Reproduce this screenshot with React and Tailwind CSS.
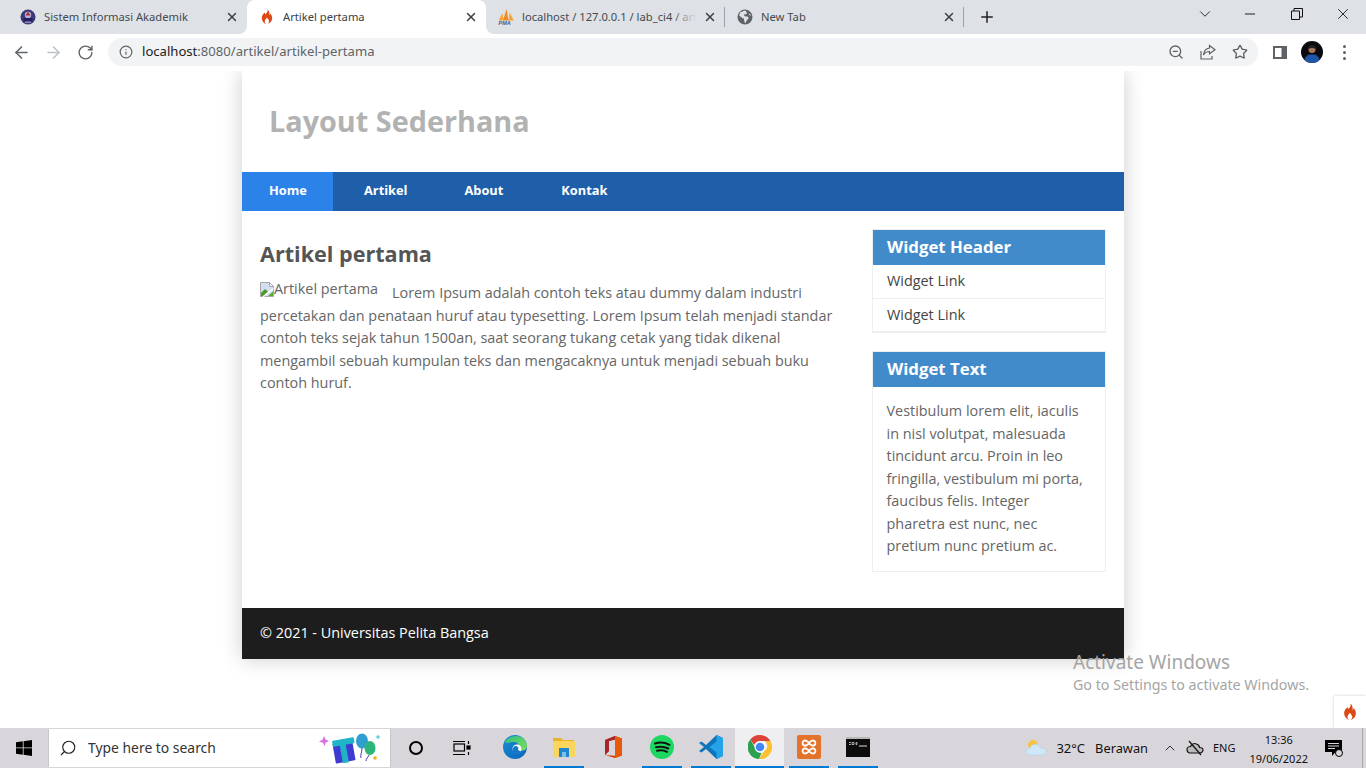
import React from "react";
import {
  ArrowLeft,
  ArrowRight,
  RotateCw,
  Info,
  ZoomOut,
  Star,
  ChevronDown,
  ChevronUp,
  X,
  Plus,
  Minus,
  Search,
} from "lucide-react";

const UI_FONT = "font-['Noto_Sans',sans-serif]";

// --- favicons and app logos ---
const Flame = ({ size = 16 }) => (
  <svg width={size} height={size} viewBox="0 0 16 16">
    <path
      fill="#dd4814"
      d="M8.6 0.6c.5 2.2-1 3.4-2.2 4.8C6 4.8 5.9 4.2 6 3.5 4.2 4.8 2.6 6.8 2.8 9.4c.2 3 2.4 5.2 4.6 5.8-1.2-.9-1.9-2-1.6-3.3.3-1.3 1.4-2 2-3.3.7 1 1.9 1.9 2.2 3.3.2 1.3-.5 2.5-1.6 3.3 2.5-.6 4.6-2.9 4.8-5.6.2-2.7-1.2-4.2-2-5.2-.1.8-.4 1.4-1 1.8C10.6 4.300 10.400 2 8.600.6z"
    />
  </svg>
);

const AkademikIcon = () => (
  <svg width="16" height="16" viewBox="0 0 16 16">
    <circle cx="8" cy="8" r="7.5" fill="#3d3a7c" />
    <circle cx="8" cy="6" r="3.2" fill="#b9b4d6" />
    <path d="M8 2.500 10.500 6.500H5.500z" fill="#a8323a" />
    <rect x="3.500" y="9" width="9" height="3.500" fill="#23205e" />
    <rect x="5" y="12.500" width="6" height="1.500" fill="#8f8bbd" />
  </svg>
);

const PmaIcon = () => (
  <svg width="16" height="16" viewBox="0 0 16 16">
    <path d="M0.500 11.500 4.500 4l1 7.500z" fill="#f6a53a" />
    <path d="M5 11.500 8.500 0 10.500 11.500z" fill="#f18a21" />
    <path d="M10.500 11.500 11.800 3.500l4 8z" fill="#f6a53a" />
    <text x="0.500" y="16" fontSize="5.500" fontWeight="700" fontStyle="italic" fill="#4a5c8f" fontFamily="Liberation Sans">
      PMA
    </text>
  </svg>
);

const GlobeIcon = () => (
  <svg width="16" height="16" viewBox="0 0 16 16">
    <circle cx="8" cy="8" r="7.500" fill="#5f6368" />
    <path
      fill="#dee1e6"
      d="M7 1.800 3 3.600l-.8 3 3.300 2.600 1.500.2v1.800l1 2.700.9-.1.700-2.400 1.900-2-.2-1.700-3.400-.5-1.200-1.400 1.100-.6.900.4 1.400-1.300L8.700 1.700zM12.500 4.500l-.8 1 1.800 1.300.5-.3z"
    />
  </svg>
);

const WindowsLogo = () => (
  <svg width="16" height="16" viewBox="0 0 16 16" fill="#000">
    <path d="M0 2.200 6.800 1.300v6.200H0zM7.600 1.200 16 0v7.500H7.600zM0 8.300h6.800v6.400L0 13.800zM7.600 8.300H16V16l-8.400-1.200z" />
  </svg>
);

const GiftArt = () => (
  <svg width="70" height="34" viewBox="0 0 70 34">
    <path d="M6 5l1.500 3.500L11 10 7.800 11.500 6.500 15 5 11.800 1 10.500 4.500 8.800z" fill="#d76ee6" />
    <rect x="16" y="11" width="20" height="20" rx="1" fill="#3d3bd1" transform="rotate(-10 26 21)" />
    <rect x="23" y="9" width="6" height="23" fill="#20b3c4" transform="rotate(-10 26 21)" />
    <rect x="15" y="8" width="22" height="6" rx="1" fill="#1fb5c7" transform="rotate(-10 26 15)" />
    <ellipse cx="44" cy="10" rx="6" ry="7.500" fill="#2f9fd0" />
    <ellipse cx="52" cy="17" rx="5.500" ry="7" fill="#2eb57a" />
    <path d="M44 17c0 5-2 7-1 10M51 24c-1 3-3 3-3 6" stroke="#4a3bb0" strokeWidth="1" fill="none" />
    <circle cx="60" cy="6" r="1.800" fill="#5ed5e5" />
    <circle cx="57" cy="27" r="1.800" fill="#f6b01e" />
  </svg>
);

const TaskViewIcon = () => (
  <svg width="18" height="16" viewBox="0 0 18 16" fill="none" stroke="#000" strokeWidth="1.200">
    <rect x="1" y="4" width="10.500" height="7" />
    <path d="M0 1.500h12M0 14.500h12M15.500 1v3M15.500 12v3" />
    <rect x="14" y="6" width="3" height="3" fill="#000" />
  </svg>
);

const EdgeIcon = () => (
  <svg width="24" height="24" viewBox="0 0 24 24">
    <defs>
      <linearGradient id="edgeA" x1="0" y1="0" x2="1" y2="1">
        <stop offset="0" stopColor="#2fc27e" />
        <stop offset="1" stopColor="#7fdc5f" />
      </linearGradient>
      <linearGradient id="edgeB" x1="0" y1="0" x2="1" y2="1">
        <stop offset="0" stopColor="#1a8fd6" />
        <stop offset="1" stopColor="#0b63b8" />
      </linearGradient>
    </defs>
    <circle cx="12" cy="12" r="12" fill="url(#edgeB)" />
    <path d="M2 7C5 1 14-1 20 3c4 3 5 8 3 11-2 2-6 2-8 0 2-3 0-7-4-7S4 9 2 7z" fill="url(#edgeA)" />
    <circle cx="14" cy="14" r="4.500" fill="#fff" />
    <path d="M12 11c3 0 4 2 3 4l4 2c-2 3-6 3-8 1-2-2-2-5 1-7z" fill="#1478c8" />
  </svg>
);

const ExplorerIcon = () => (
  <svg width="22" height="20" viewBox="0 0 22 20">
    <path d="M0 1h8l2 2h11v4H0z" fill="#e9b32c" />
    <rect y="4" width="22" height="16" rx="1" fill="#fbd55c" />
    <path d="M6 11h10v9h-3v-5H9v5H6z" fill="#1f87cf" />
    <rect x="9" y="15" width="4" height="5" fill="#7ac2ea" />
  </svg>
);

const OfficeIcon = () => (
  <svg width="18" height="22" viewBox="0 0 18 22">
    <path d="M11 0 18 2.500v17L11 22 1 19l10 .7V3.500L5 5v10l-4 4V4z" fill="#d83b01" />
    <path d="M1 4 11 0v3.500L5 5v10l-4 4z" fill="#a4262c" />
    <path d="M11 0l7 2.500v17L11 22z" fill="#e8590c" />
  </svg>
);

const SpotifyIcon = () => (
  <svg width="24" height="24" viewBox="0 0 24 24">
    <circle cx="12" cy="12" r="12" fill="#1ed760" />
    <path d="M5 8.500c5-1.500 10-1 14.500 1.300M6 12.300c4.500-1.200 8.500-.7 12.300 1.200M7 15.800c3.600-.9 7-.6 10 1" stroke="#111" strokeWidth="2" fill="none" strokeLinecap="round" />
  </svg>
);

const VscodeIcon = () => (
  <svg width="24" height="24" viewBox="0 0 24 24">
    <path d="M17.500 0 24 3v18l-6.500 3L7 14l-4.500 3.500L0 16l5-4-5-4 2.500-1.500L7 10z" fill="#0e75bc" />
    <path d="M17.500 0 24 3v18l-6.500 3zM17.500 6.500 10.500 12l7 5.500z" fill="#24a3e8" fillRule="evenodd" />
  </svg>
);

const ChromeIcon = () => (
  <svg width="24" height="24" viewBox="0 0 24 24">
    <path d="M12 0a12 12 0 0 1 10.400 6H12a6 6 0 0 0-5.700 4L2.300 4.500A12 12 0 0 1 12 0z" fill="#dc4437" />
    <path d="M22.400 6A12 12 0 0 1 11 24l5.200-8a6 6 0 0 0 .6-10z" fill="#fbc02d" />
    <path d="M2.300 4.500 7 12.600a6 6 0 0 0 6.500 5.200L11 24A12 12 0 0 1 2.300 4.500z" fill="#2e9e4f" />
    <circle cx="12" cy="12" r="5.500" fill="#fff" />
    <circle cx="12" cy="12" r="4.300" fill="#4285f4" />
  </svg>
);

const XamppIcon = () => (
  <svg width="24" height="24" viewBox="0 0 24 24">
    <rect width="24" height="24" rx="2" fill="#e5722b" />
    <path d="M8 5.500c-2.500 0-3.500 3.500-1 5h2l3-2 3 2h2c2.500-1.500 1.500-5-1-5s-3 2-4 2-1.500-2-4-2zM8 18.500c-2.500 0-3.500-3.500-1-5h2l3 2 3-2h2c2.500 1.500 1.500 5-1 5s-3-2-4-2-1.500 2-4 2z" fill="none" stroke="#fff" strokeWidth="1.800" />
  </svg>
);

const CmdIcon = () => (
  <svg width="24" height="20" viewBox="0 0 24 20">
    <rect width="24" height="20" fill="#0c0c0c" />
    <rect width="24" height="2" fill="#b8b8b8" />
    <path d="M3 5.500h2M3 7.500h2M6 5.500h2v2H6zM10 5.500h1v2h-1z" stroke="#ccc" strokeWidth=".8" fill="none" />
    <path d="M13 9h8" stroke="#ddd" strokeWidth="1" />
  </svg>
);

const CloudIcon = () => (
  <svg width="22" height="18" viewBox="0 0 22 18">
    <circle cx="8" cy="6" r="5" fill="#f6c445" />
    <path d="M6 16c-3 0-5-1.500-5-3.500S3 9 5 9c1-3 5-5 8-3 1.500 1 2 2 2 3 3-.5 6 1 6 3.500S19 16 17 16z" fill="#cfe7f7" stroke="#a9d3ee" strokeWidth=".6" />
  </svg>
);

const OfflineIcon = () => (
  <svg width="18" height="16" viewBox="0 0 18 16" fill="none" stroke="#111" strokeWidth="1.200">
    <path d="M1 9.500c0-2 2-3 3.500-3C5.500 4 8 3 10.500 4c2 .7 3 2 3 3.500 2 0 3.500 1 3.500 2.500s-1.500 3-3 3H4c-2 0-3-2-3-3.500z" fill="#bbb" />
    <path d="M3 1l12 14" />
  </svg>
);

const NotifIcon = () => (
  <svg width="18" height="17" viewBox="0 0 18 17">
    <path d="M0 0h17v12h-6.500l-3.500 4v-4H0z" fill="#000" />
    <path d="M3 3.500h11M3 6h11M3 8.500h7" stroke="#d9d6db" strokeWidth="1" />
    <circle cx="14" cy="13" r="3.500" fill="#d9d6db" stroke="#000" />
  </svg>
);

const ShareIcon = () => (
  <svg width="16" height="16" viewBox="0 0 16 16" fill="none" stroke="#5f6368" strokeWidth="1.200">
    <path d="M1 7v8h11v-3" />
    <path d="M9.500 1.500 15 5.800l-5.500 4V7.500C7 7.500 5 8.500 3.500 11 3.800 7.500 6 4.500 9.500 4z" />
  </svg>
);

const BrokenImage = () => (
  <svg width="14" height="15" viewBox="0 0 14 15" className="inline-block align-[-3px]">
    <path d="M.5.500h9l4 4v10H.5z" fill="#d3def5" stroke="#a8a8a8" />
    <path d="M9.500.500v4h4z" fill="#fff" stroke="#a8a8a8" />
    <path d="M1 14V11l4-4 3 2.500-4.500 4.500z" fill="#4c9a2a" />
    <path d="M13 14H8l5-4.500z" fill="#5fa83a" />
    <path d="M13.500 6.500 3 14.800" stroke="#fff" strokeWidth="1.500" />
  </svg>
);

const Avatar = () => (
  <svg width="22" height="22" viewBox="0 0 22 22">
    <clipPath id="avatarClip">
      <circle cx="11" cy="11" r="11" />
    </clipPath>
    <g clipPath="url(#avatarClip)">
      <rect width="22" height="22" fill="#0b0b0f" />
      <path d="M3 22c0-5 3-8 5.500-8.500h5C16 14 19 17 19 22z" fill="#1d56a8" />
      <circle cx="11" cy="8.500" r="3.500" fill="#a87a5a" />
      <path d="M7.500 8c0-3 1.500-4 3.500-4s3.500 1 3.500 4c-2-1.500-5-1.500-7 0z" fill="#222" />
    </g>
  </svg>
);

// --- browser tabs ---
const tabs = [
  { id: 1, title: "Sistem Informasi Akademik", icon: <AkademikIcon /> },
  { id: 2, title: "Artikel pertama", icon: <Flame />, active: true },
  { id: 3, title: "localhost / 127.0.0.1 / lab_ci4 / artikel", icon: <PmaIcon />, fade: true, divider: true },
  { id: 4, title: "New Tab", icon: <GlobeIcon />, divider: true },
];

const Tab = ({ tab }) => (
  <div
    className={`relative flex items-center h-[34px] w-[239px] shrink-0 pl-[12px] ${
      tab.active ? "bg-white rounded-t-lg text-[#3c4043]" : "text-[#45494e]"
    }`}
  >
    {tab.active && (
      <>
        <span className="absolute -left-2 bottom-0 w-2 h-2 bg-white">
          <span className="block w-2 h-2 bg-[#dee1e6] rounded-br-lg" />
        </span>
        <span className="absolute -right-2 bottom-0 w-2 h-2 bg-white">
          <span className="block w-2 h-2 bg-[#dee1e6] rounded-bl-lg" />
        </span>
      </>
    )}
    <span className="w-4 h-4 shrink-0 flex items-center justify-center">{tab.icon}</span>
    <div className="relative ml-2 w-[174px] overflow-hidden whitespace-nowrap text-[11.2px] leading-[16px]">
      {tab.title}
      {tab.fade && <span className="absolute right-0 top-0 h-full w-6 bg-gradient-to-r from-transparent to-[#dee1e6]" />}
    </div>
    <X className="w-[14px] h-[14px] ml-auto mr-[7px] shrink-0 text-[#3c4043]" strokeWidth={2.500} />
    {tab.divider ? <span className="w-px h-5 bg-[#9aa0a6] shrink-0" /> : <span className="w-px shrink-0" />}
  </div>
);

const ChromeBar = () => (
  <div className={`relative z-10 bg-white ${UI_FONT}`}>
    <div className="flex items-center h-[34px] bg-[#dee1e6] pl-2">
      {tabs.map((tab) => (
        <Tab key={tab.id} tab={tab} />
      ))}
      <Plus className="w-[18px] h-[18px] ml-[14px] text-[#202124]" strokeWidth={2} />
      <div className="ml-auto flex items-center h-full text-[#202124]">
        <ChevronDown className="w-[18px] h-[18px] mr-[28px] -mt-[6px]" strokeWidth={1.250} />
        <Minus className="w-[16px] h-[16px] mr-[33px] -mt-[6px]" strokeWidth={1.500} />
        <svg width="12" height="12" viewBox="0 0 12 12" fill="none" stroke="#111" className="mr-[31px] -mt-[6px]">
          <path d="M.5 3h8v8.500h-8zM3 3V.5h8.500v8.500H8.500" />
        </svg>
        <X className="w-[18px] h-[18px] mr-[14px] -mt-[6px]" strokeWidth={1.250} />
      </div>
    </div>
    <div className="flex items-center h-[37px] pb-[1px]">
      <ArrowLeft className="w-[19px] h-[19px] ml-[12px] text-[#5f6368]" strokeWidth={2} />
      <ArrowRight className="w-[19px] h-[19px] ml-[13px] text-[#bdc1c6]" strokeWidth={2} />
      <RotateCw className="w-[17px] h-[17px] ml-[14px] text-[#5f6368]" strokeWidth={2} />
      <div className="ml-[14px] flex items-center h-[28px] w-[1150px] rounded-full bg-[#f1f3f4] pl-[11px] pr-[10px]">
        <Info className="w-[14px] h-[14px] text-[#5f6368]" strokeWidth={2} />
        <span className="ml-[9px] text-[13.100px] text-[#5f6368] whitespace-nowrap">
          <span className="text-[#202124]">localhost</span>:8080/artikel/artikel-pertama
        </span>
        <div className="ml-auto flex items-center gap-[16px]">
          <ZoomOut className="w-4 h-4 text-[#5f6368]" strokeWidth={2} />
          <ShareIcon />
          <Star className="w-4 h-4 text-[#5f6368]" strokeWidth={2} />
        </div>
      </div>
      <svg width="14" height="13" viewBox="0 0 14 13" className="ml-[15px]">
        <path d="M0 0h14v13H0z" fill="#5f6368" />
        <rect x="2" y="2" width="6.500" height="9" fill="#fff" />
      </svg>
      <span className="ml-[14px]">
        <Avatar />
      </span>
      <div className="ml-[20px] flex flex-col gap-[3px]">
        <span className="w-[3px] h-[3px] rounded-full bg-[#5f6368]" />
        <span className="w-[3px] h-[3px] rounded-full bg-[#5f6368]" />
        <span className="w-[3px] h-[3px] rounded-full bg-[#5f6368]" />
      </div>
    </div>
  </div>
);

// --- the page inside the browser ---
const navLinks = [
  { label: "Home", className: "w-[91px] pl-[27px] bg-[#2b83ea]" },
  { label: "Artikel", className: "pl-[31px] pr-[28px]" },
  { label: "About", className: "pl-[29px] pr-[29px]" },
  { label: "Kontak", className: "pl-[29px]" },
];

const Widget = ({ title, children }) => (
  <div className="border border-[#eeeeee]">
    <h3 className="h-[35px] pl-[14px] bg-[#428bca] text-white text-[16.800px] font-bold leading-[34px]">{title}</h3>
    {children}
  </div>
);

const WebPage = () => (
  <div className="flex-1 min-h-0 font-['Open_Sans',sans-serif]">
    <div className="w-[882px] mx-auto bg-white shadow-[0_0_20px_rgba(0,0,0,0.2)]">
      <header className="h-[101px] pl-[27px] pt-[30px]">
        <h1 className="text-[28.800px] leading-[40px] font-bold text-[#b2b2b2]">Layout Sederhana</h1>
      </header>
      <nav className="flex h-[39px] bg-[#1f5faa] text-white text-[12.800px] font-bold leading-[37px]">
        {navLinks.map((link) => (
          <a key={link.label} className={link.className}>
            {link.label}
          </a>
        ))}
      </nav>
      <div className="flex h-[397px] pl-[18px] pr-[18px] pt-[18px]">
        <article className="w-[582px]">
          <h2 className="text-[21.600px] leading-[30px] font-bold text-[#555555] mt-[10px] mb-[13px]">Artikel pertama</h2>
          <p className="text-[14.400px] leading-[22.500px] text-[#666666]">
            <span className="float-left mr-[14px] -mt-[4px]">
              <BrokenImage />
              Artikel pertama
            </span>
            Lorem Ipsum adalah contoh teks atau dummy dalam industri percetakan dan penataan huruf atau typesetting.
            Lorem Ipsum telah menjadi standar contoh teks sejak tahun 1500an, saat seorang tukang cetak yang tidak
            dikenal mengambil sebuah kumpulan teks dan mengacaknya untuk menjadi sebuah buku contoh huruf.
          </p>
        </article>
        <aside className="ml-auto w-[234px] flex flex-col gap-[18px]">
          <Widget title="Widget Header">
            <a className="block h-[34px] pl-[14px] leading-[32px] text-[14.400px] text-[#444444] border-b border-[#eeeeee]">
              Widget Link
            </a>
            <a className="block h-[33px] pl-[14px] leading-[31px] text-[14.400px] text-[#444444] border-b border-[#eeeeee]">
              Widget Link
            </a>
          </Widget>
          <Widget title="Widget Text">
            <p className="px-[13.500px] pt-[13px] pb-[13.500px] text-[14.400px] leading-[22.500px] text-[#666666]">
              Vestibulum lorem elit, iaculis in nisl volutpat, malesuada tincidunt arcu. Proin in leo fringilla,
              vestibulum mi porta, faucibus felis. Integer pharetra est nunc, nec pretium nunc pretium ac.
            </p>
          </Widget>
        </aside>
      </div>
      <footer className="h-[51px] pl-[18px] bg-[#1d1d1d] text-white text-[14.400px] leading-[50px]">
        © 2021 - Universitas Pelita Bangsa
      </footer>
    </div>
  </div>
);

// --- windows taskbar ---
const taskApps = [
  { id: "edge", icon: <EdgeIcon /> },
  { id: "explorer", icon: <ExplorerIcon />, running: true },
  { id: "office", icon: <OfficeIcon /> },
  { id: "spotify", icon: <SpotifyIcon />, running: true },
  { id: "vscode", icon: <VscodeIcon />, running: true },
  { id: "chrome", icon: <ChromeIcon />, running: true, active: true },
  { id: "xampp", icon: <XamppIcon />, running: true },
  { id: "cmd", icon: <CmdIcon />, running: true },
];

const Taskbar = () => (
  <div className={`relative z-10 flex items-center h-[40px] bg-[#d9d6db] text-[#111] ${UI_FONT}`}>
    <span className="ml-4">
      <WindowsLogo />
    </span>
    <div className="ml-[16px] flex items-center h-[38px] w-[343px] bg-white border-x border-[#c8c8c8]">
      <Search className="w-[18px] h-[18px] ml-[10px] -scale-x-100 text-[#222]" strokeWidth={1.500} />
      <span className="ml-[11px] mt-[1px] text-[13.900px] text-[#333]">Type here to search</span>
      <span className="ml-auto mr-[2px]">
        <GiftArt />
      </span>
    </div>
    <span className="ml-[18px] w-[14px] h-[14px] rounded-full border-2 border-black" />
    <span className="ml-[30px]">
      <TaskViewIcon />
    </span>
    <div className="ml-[19px] flex h-full">
      {taskApps.map((app) => (
        <div
          key={app.id}
          className={`flex flex-col items-center w-[49px] h-full ${app.active ? "bg-[#efeff2]" : ""}`}
        >
          <div className="flex-1 flex items-center justify-center">{app.icon}</div>
          <span
            className={`h-[2px] ${app.active ? "w-full" : "w-[40px]"} ${app.running ? "bg-[#0078d4]" : ""}`}
          />
        </div>
      ))}
    </div>
    <div className="ml-auto flex items-center h-full">
      <CloudIcon />
      <span className="ml-[9px] mt-[1px] text-[13px]">32°C</span>
      <span className="ml-[10px] mt-[1px] text-[12.800px]">Berawan</span>
      <ChevronUp className="ml-[14px] w-[16px] h-[16px]" strokeWidth={1.250} />
      <span className="ml-[8px]">
        <OfflineIcon />
      </span>
      <span className="ml-[9px] text-[11px]">ENG</span>
      <div className="ml-[14px] flex flex-col items-center text-[11px] leading-[19px] pt-[1px]">
        <span>13:36</span>
        <span>19/06/2022</span>
      </div>
      <span className="ml-[17px]">
        <NotifIcon />
      </span>
      <span className="ml-[19px] mr-[3px] w-px h-full bg-[#a8a8a8]" />
    </div>
  </div>
);

export default function App() {
  return (
    <div className="relative flex flex-col h-screen overflow-hidden bg-white">
      <ChromeBar />
      <WebPage />
      <Taskbar />

      {/* Overlays that sit on top of the page */}
      <div className={`absolute left-[1073px] top-[649px] text-[#a5a5a5] ${UI_FONT}`}>
        <div className="text-[19px] leading-[26px]">Activate Windows</div>
        <div className="text-[14.250px] leading-[20px]">Go to Settings to activate Windows.</div>
      </div>
      <div className="absolute right-0 top-[696px] w-[32px] h-[32px] flex items-center justify-center bg-white shadow-[0_0_3px_rgba(0,0,0,0.2)]">
        <Flame size={18} />
      </div>
    </div>
  );
}
